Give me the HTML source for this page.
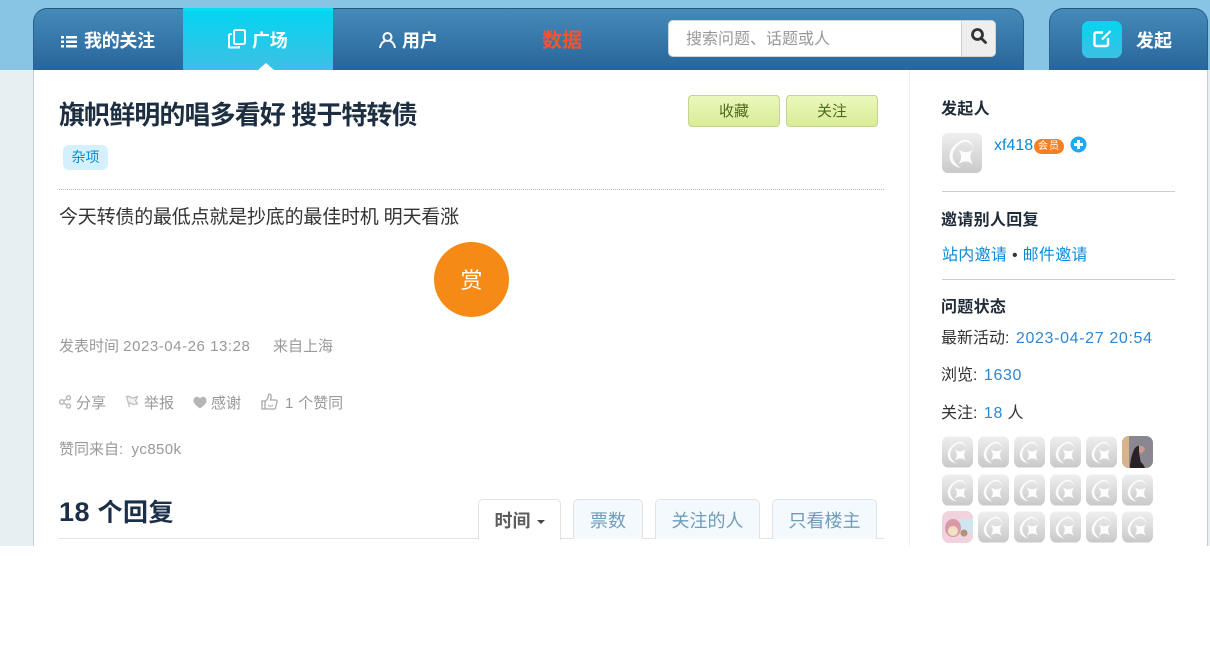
<!DOCTYPE html>
<html lang="zh"><head><meta charset="utf-8"><title>旗帜鲜明的唱多看好 搜于特转债</title>
<style>
*{box-sizing:border-box;margin:0;padding:0}
html,body{width:1210px;height:648px;overflow:hidden;background:#fff}
body{position:relative;font-family:"Liberation Sans","Noto Sans CJK SC",sans-serif;color:#333}
.a{position:absolute;white-space:nowrap}
.blue{color:#0a8bd8}
.nav{color:#fff;font-weight:bold;font-size:18px;line-height:24px}
.gray{color:#999;font-size:15px;line-height:20px}
.gray i{font-style:normal;letter-spacing:.55px}
.btn{position:absolute;top:95px;width:92px;height:32px;border:1px solid #c3d491;border-radius:4px;background:linear-gradient(#ebf8bd,#d9ec96);color:#4e6a1c;font-size:15px;line-height:32px;text-align:center}
.h3{font-size:16px;font-weight:bold;color:#1f2c38;line-height:22px;letter-spacing:.3px}
.s{font-size:16px;line-height:22px;color:#333}
.s b{font-weight:normal;color:#2f86d2;letter-spacing:.65px;margin-left:2px}
.tab{position:absolute;top:499px;height:40px;border:1px solid #dfe3e6;border-bottom:0;border-radius:5px 5px 0 0;background:#f4f9fd;color:#6f9db9;font-size:18px;line-height:42px;text-align:center}
.av{position:absolute;width:31px;height:32px;border-radius:7px;overflow:hidden}
</style></head><body>
<svg width="0" height="0" style="position:absolute"><defs>
<linearGradient id="g" x1="0" y1="0" x2="0" y2="1"><stop offset="0" stop-color="#efefef"/><stop offset="1" stop-color="#c9c9c9"/></linearGradient>
<symbol id="d" viewBox="0 0 32 32"><rect width="32" height="32" fill="url(#g)"/><path d="M26 13C24 7 20 4.500 17 5.500C10 8 5.500 14 6 20C6.500 24 10 27 15 28C11 25 8.500 22 8.500 18C9 13 13 8 18 7C21 6.500 24 9 26 13Z" fill="#fff" opacity=".92"/><path d="M13 13Q19 17.500 25 13Q20.500 19 25 25Q19 20.500 13 25Q17.500 19 13 13Z" fill="#fff" opacity=".95"/></symbol>
</defs></svg>

<div class="a" style="left:0;top:0;width:1210px;height:70px;background:#88c4e4"></div>
<div class="a" style="left:0;top:70px;width:33px;height:476px;background:#e6eff2"></div>
<div class="a" style="left:1208px;top:70px;width:2px;height:476px;background:#e6eff2"></div>
<div class="a" style="left:33px;top:70px;width:1px;height:476px;background:#c9ced3"></div>
<div class="a" style="left:1207px;top:70px;width:1px;height:476px;background:#c9ced3"></div>
<div class="a" style="left:909px;top:70px;width:1px;height:476px;background:#f0f1f2"></div>

<div class="a" style="left:33px;top:8px;width:991px;height:62px;border-radius:14px 14px 0 0;background:linear-gradient(#458ab9,#28659a);border-top:1px solid #24587e;border-left:1px solid #2b6288;border-right:1px solid #2b6288"></div>
<div class="a" style="left:183px;top:8px;width:150px;height:62px;background:linear-gradient(#03d5f1,#3ebfe4);border-top:3px solid #09dcf5"></div>
<div class="a" style="left:258px;top:63px;width:0;height:0;border-left:8px solid transparent;border-right:8px solid transparent;border-bottom:7px solid #fff"></div>

<svg class="a" style="left:61px;top:35px" width="17" height="14" fill="#fff"><rect x="0" y="1" width="3" height="2.500"/><rect x="5" y="1" width="11" height="2.500"/><rect x="0" y="5.500" width="3" height="2.500"/><rect x="5" y="5.500" width="11" height="2.500"/><rect x="0" y="10" width="3" height="2.500"/><rect x="5" y="10" width="11" height="2.500"/></svg>
<div class="a nav" style="left:84px;top:29px;letter-spacing:-.3px">我的关注</div>
<svg class="a" style="left:228px;top:28px" width="19" height="21" fill="none" stroke="#fff" stroke-width="2"><rect x="6" y="2" width="11" height="14" rx="1.500"/><path d="M4 6H2.500A1.500 1.500 0 0 0 1 7.500V18.500A1 1 0 0 0 2 19.500H11V18"/></svg>
<div class="a nav" style="left:252px;top:29px;letter-spacing:-.3px">广场</div>
<svg class="a" style="left:378px;top:31px" width="18" height="18" fill="none" stroke="#fff" stroke-width="2"><circle cx="9.500" cy="6" r="4"/><path d="M2 17C2.500 13 5 10.500 7 10M17 17C16.500 13 14 10.500 12 10"/></svg>
<div class="a nav" style="left:402px;top:29px">用户</div>
<div class="a" style="left:542px;top:27px;font-size:20px;line-height:28px;font-weight:bold;color:#f0562d">数据</div>

<div class="a" style="left:668px;top:20px;width:328px;height:37px;background:#fff;border:1px solid #cfd6dc;border-radius:5px"></div>
<div class="a" style="left:961px;top:20px;width:35px;height:37px;background:#eee;border:1px solid #cfd1d3;border-radius:0 5px 5px 0"></div>
<div class="a" style="left:686px;top:28px;font-size:16px;line-height:24px;color:#999">搜索问题、话题或人</div>
<svg class="a" style="left:970px;top:27px" width="18" height="18" fill="none" stroke="#333" stroke-width="2.800"><circle cx="7.500" cy="7.500" r="5"/><path d="M11.500 11.500L15.500 15.500" stroke-linecap="round"/></svg>

<div class="a" style="left:1049px;top:8px;width:159px;height:62px;border-radius:14px 14px 0 0;background:linear-gradient(#458ab9,#28659a);border-top:1px solid #24587e;border-left:1px solid #2b6288;border-right:1px solid #2b6288"></div>
<div class="a" style="left:1082px;top:21px;width:40px;height:37px;border-radius:7px;background:linear-gradient(#03d5f1,#3ebfe4)"></div>
<svg class="a" style="left:1092px;top:29px" width="21" height="20" fill="none" stroke="#fff" stroke-width="2.400"><path d="M11 3.500H4A1.500 1.500 0 0 0 2.500 5V15.500A1.500 1.500 0 0 0 4 17H14.500A1.500 1.500 0 0 0 16 15.500V9"/><path d="M10 10.500L18.500 2" stroke-width="2"/></svg>
<div class="a nav" style="left:1136px;top:29px">发起</div>

<div class="a" style="left:59px;top:97px;font-size:26px;line-height:36px;font-weight:bold;color:#1c2e40;letter-spacing:-.9px">旗帜鲜明的唱多看好 搜于特转债</div>
<div class="a" style="left:63px;top:145px;width:45px;height:25px;border-radius:6px;background:#d4f0fd;color:#0a8bd8;font-size:14px;line-height:25px;text-align:center">杂项</div>
<div class="a" style="left:59px;top:189px;width:825px;border-top:1px dotted #bbb"></div>
<div class="btn" style="left:688px">收藏</div>
<div class="btn" style="left:786px">关注</div>

<div class="a" style="left:59px;top:204px;font-size:19px;line-height:28px;color:#333;letter-spacing:-.2px">今天转债的最低点就是抄底的最佳时机 明天看涨</div>
<div class="a" style="left:434px;top:242px;width:75px;height:75px;border-radius:50%;background:#f58a17;color:#fff;font-size:22px;line-height:77px;text-align:center">赏</div>
<div class="a gray" style="left:59px;top:337px">发表时间 <i>2023-04-26 13:28</i></div>
<div class="a gray" style="left:273px;top:337px">来自上海</div>

<svg class="a" style="left:59px;top:395px" width="13" height="14" fill="none" stroke="#bbb" stroke-width="1.500"><circle cx="9.500" cy="2.800" r="2"/><circle cx="2.800" cy="7" r="2.200"/><circle cx="9.500" cy="11" r="2"/><path d="M4.500 6L8 4M4.500 8L8 10"/></svg>
<div class="a gray" style="left:76px;top:394px">分享</div>
<svg class="a" style="left:125px;top:395px" width="14" height="14" fill="#f1f1f1" stroke="#bbb" stroke-width="1.200"><path d="M1.500 1.500C4 .5 5.500 2.500 7 3C9 3.500 10.500 1.500 12.500 1.500L10.500 5.500L12.500 9C10 9 8 10 6 8.500C5 7.800 4 8 3.500 8.500L4.500 12Z"/></svg>
<div class="a gray" style="left:144px;top:394px">举报</div>
<svg class="a" style="left:193px;top:396px" width="14" height="13" fill="#b5b5b5"><path d="M7 12.500C3 9.500 .5 7.500 .5 4.500C.5 2 2.500 .8 4 .8C5.500 .8 6.500 1.600 7 2.800C7.500 1.600 8.500 .8 10 .8C11.500 .8 13.500 2 13.500 4.500C13.500 7.500 11 9.500 7 12.500Z"/></svg>
<div class="a gray" style="left:211px;top:394px">感谢</div>
<svg class="a" style="left:261px;top:393px" width="17" height="17" fill="none" stroke="#a9a9a9" stroke-width="1.300"><path d="M1 8H4V16H1ZM4 8.500C6 7 7.500 5 7.500 2C7.500 .8 9.500 .8 10 2.500C10.500 4 10 5.500 9.500 7H15C16 7 16.300 8 16 9L14.500 15C14.300 15.700 13.800 16 13 16H4"/><path d="M7 12C8.500 13.500 10.500 13.500 12 12" stroke-width="1"/></svg>
<div class="a gray" style="left:285px;top:394px"><i>1</i> 个赞同</div>
<div class="a gray" style="left:59px;top:440px">赞同来自:&nbsp; <i style="letter-spacing:.4px">yc850k</i></div>

<div class="a" style="left:59px;top:494px;font-size:25px;line-height:36px;font-weight:bold;color:#1b3048;letter-spacing:.5px"><span style="font-size:27px">18</span> 个回复</div>
<div class="a" style="left:59px;top:538px;width:825px;height:1px;background:#dfe3e6"></div>
<div class="tab" style="left:478px;width:83px;height:41px;background:#fff;color:#5c5c5c;font-weight:bold">时间 <span style="display:inline-block;width:0;height:0;border-left:4px solid transparent;border-right:4px solid transparent;border-top:4px solid #444;vertical-align:middle;margin-left:1px"></span></div>
<div class="tab" style="left:573px;width:70px">票数</div>
<div class="tab" style="left:655px;width:105px">关注的人</div>
<div class="tab" style="left:772px;width:105px">只看楼主</div>

<div class="a h3" style="left:941px;top:99px">发起人</div>
<svg class="a" style="left:942px;top:133px;border-radius:6px" width="40" height="40"><use href="#d"/></svg>
<div class="a blue" style="left:994px;top:135px;font-size:16px;line-height:22px">xf418</div>
<div class="a" style="left:1034px;top:139px;width:30px;height:15px;border-radius:8px;background:#f77f22;color:#fff;font-size:10px;line-height:15px;text-align:center;letter-spacing:1px">会员</div>
<svg class="a" style="left:1070px;top:136px" width="17" height="17"><circle cx="8.500" cy="8.500" r="8" fill="#22a7f5"/><path d="M8.500 4V13M4 8.500H13" stroke="#fff" stroke-width="3"/></svg>
<div class="a" style="left:942px;top:191px;width:233px;height:1px;background:#c5cdd8"></div>
<div class="a h3" style="left:941px;top:210px">邀请别人回复</div>
<div class="a blue" style="left:942px;top:245px;font-size:16px;line-height:22px;letter-spacing:.3px">站内邀请 <span style="color:#333">•</span> 邮件邀请</div>
<div class="a" style="left:942px;top:279px;width:233px;height:1px;background:#c5cdd8"></div>
<div class="a h3" style="left:941px;top:297px">问题状态</div>
<div class="a s" style="left:941px;top:328px">最新活动: <b>2023-04-27 20:54</b></div>
<div class="a s" style="left:941px;top:365px">浏览: <b>1630</b></div>
<div class="a s" style="left:941px;top:403px">关注: <b>18</b> 人</div>

<svg class="av" style="left:942px;top:436px"><use href="#d"/></svg>
<svg class="av" style="left:978px;top:436px"><use href="#d"/></svg>
<svg class="av" style="left:1014px;top:436px"><use href="#d"/></svg>
<svg class="av" style="left:1050px;top:436px"><use href="#d"/></svg>
<svg class="av" style="left:1086px;top:436px"><use href="#d"/></svg>
<svg class="av" style="left:1122px;top:436px" viewBox="0 0 31 32"><rect width="31" height="32" fill="#8a8791"/><rect width="7" height="32" fill="#d8b48e"/><path d="M8 32C8 26 10 16 13 12C15 9.500 19 9 20 12L17 18C19 22 17 26 21 28L23 32Z" fill="#2a2124"/><path d="M17 10C20 9 23 11 23 14L19 18L17 16Z" fill="#c89a8d"/></svg>
<svg class="av" style="left:942px;top:474px"><use href="#d"/></svg>
<svg class="av" style="left:978px;top:474px"><use href="#d"/></svg>
<svg class="av" style="left:1014px;top:474px"><use href="#d"/></svg>
<svg class="av" style="left:1050px;top:474px"><use href="#d"/></svg>
<svg class="av" style="left:1086px;top:474px"><use href="#d"/></svg>
<svg class="av" style="left:1122px;top:474px"><use href="#d"/></svg>
<svg class="av" style="left:942px;top:511px" viewBox="0 0 31 32"><rect width="31" height="32" fill="#f0d3dc"/><rect x="18" y="8" width="13" height="14" fill="#cfe6ef"/><ellipse cx="11" cy="17" rx="8" ry="9" fill="#d89aa6"/><ellipse cx="11" cy="20" rx="5" ry="5" fill="#f1e1c4"/><circle cx="22" cy="22" r="3.500" fill="#b98f7c"/></svg>
<svg class="av" style="left:978px;top:511px"><use href="#d"/></svg>
<svg class="av" style="left:1014px;top:511px"><use href="#d"/></svg>
<svg class="av" style="left:1050px;top:511px"><use href="#d"/></svg>
<svg class="av" style="left:1086px;top:511px"><use href="#d"/></svg>
<svg class="av" style="left:1122px;top:511px"><use href="#d"/></svg>
</body></html>
